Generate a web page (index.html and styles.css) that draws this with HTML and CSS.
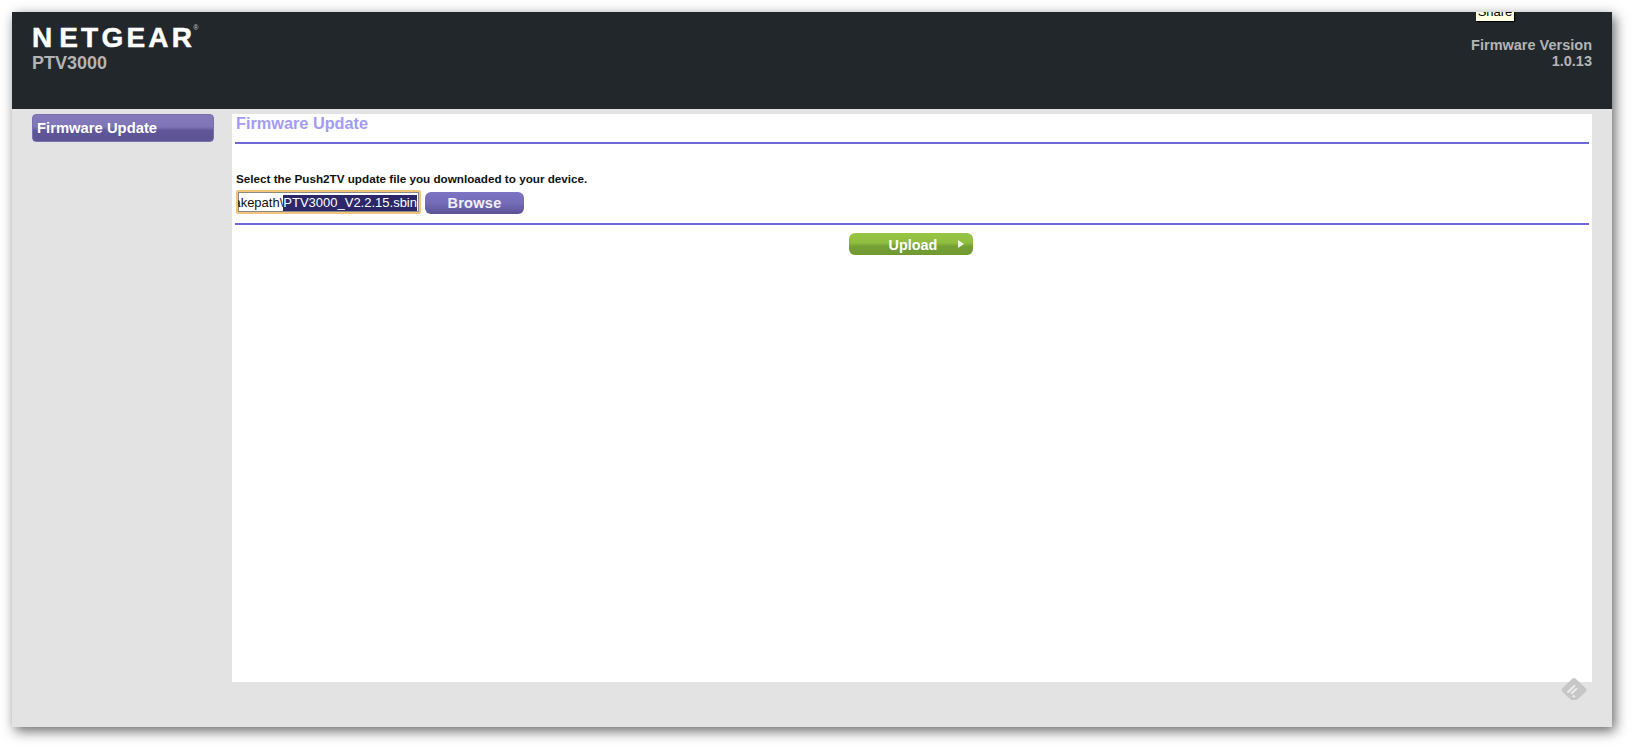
FILE: index.html
```html
<!DOCTYPE html>
<html lang="en">
<head>
<meta charset="utf-8">
<title>NETGEAR PTV3000 Firmware Update</title>
<link rel="stylesheet" href="styles.css">
</head>
<body>
<div class="window">
  <header class="masthead">
    <div class="brand">
      <div class="logo"><span class="logo-first">N</span>ETGEAR<sup class="reg">®</sup></div>
      <div class="model">PTV3000</div>
    </div>
    <div class="version">
      <div>Firmware Version</div>
      <div>1.0.13</div>
    </div>
    <div class="tooltip"><span>Share</span></div>
  </header>
  <div class="main">
    <nav class="sidebar">
      <div class="nav-item">Firmware Update</div>
    </nav>
    <section class="panel">
      <h1 class="panel-title">Firmware Update</h1>
      <div class="form-area">
        <p class="prompt">Select the Push2TV update file you downloaded to your device.</p>
        <div class="file-row">
          <div class="file-input"><span class="path">akepath\</span><span class="selected">PTV3000_V2.2.15.sbin</span></div>
          <div class="browse">Browse</div>
        </div>
      </div>
      <div class="actions">
        <div class="upload"><span>Upload</span><i class="arrow"></i></div>
      </div>
    </section>
  </div>
  <svg class="feedly" width="26" height="24" viewBox="0 0 26 24" aria-hidden="true">
    <path d="M10.800 1.300a3 3 0 0 1 4.400 0l9.500 9a2.400 2.400 0 0 1 0 3.400l-8 7.500a3 3 0 0 1-2 .8h-3.400a3 3 0 0 1-2-.8l-8-7.500a2.400 2.400 0 0 1 0-3.400z" fill="#c6c6c6"/>
    <path d="M7 14 13.500 7.800M10.800 15 15.500 10.800" fill="none" stroke="#ececec" stroke-width="2" stroke-linecap="round"/>
    <circle cx="12.800" cy="18.200" r="1.300" fill="#ececec"/>
  </svg>
</div>
</body>
</html>
```

FILE: styles.css
```css
* { box-sizing: border-box; }

html, body {
  margin: 0;
  padding: 0;
  height: 100%;
  background: #ffffff;
  overflow: hidden;
}

body {
  padding: 12px 20px 20px 12px;
  font-family: "Liberation Sans", Arial, sans-serif;
}

.window {
  position: relative;
  width: 1600px;
  height: 715px;
  background: #e3e3e3;
  box-shadow: 3px 4px 12px rgba(0, 0, 0, 0.6);
  display: flex;
  flex-direction: column;
}

.masthead {
  position: relative;
  height: 97px;
  flex: none;
  background: #22272b;
  display: flex;
  justify-content: space-between;
  padding: 0 20px 0 20px;
}

.logo {
  margin-top: 10px;
  height: 32px;
  font-size: 28px;
  line-height: 32px;
  font-weight: 700;
  letter-spacing: 3.2px;
  color: #ffffff;
  -webkit-text-stroke: 0.5px #ffffff;
}

.logo-first {
  letter-spacing: 7px;
}

.reg {
  font-size: 7px;
  font-weight: 400;
  letter-spacing: 0;
  color: #cfcfcf;
  vertical-align: 17px;
  line-height: 0;
  margin-left: -2px;
  -webkit-text-stroke: 0;
}

.model {
  margin-top: -1px;
  font-size: 18px;
  line-height: 20px;
  font-weight: 700;
  color: #b4b4b4;
}

.version {
  margin-top: 25px;
  text-align: right;
  font-size: 14.5px;
  line-height: 16px;
  font-weight: 700;
  color: #b4b4b4;
}

.tooltip {
  position: absolute;
  top: 0;
  left: 1464px;
  width: 38px;
  height: 9px;
  background: #ffffe1;
  box-shadow: 1px 1px 1px #000000;
  overflow: hidden;
  text-align: center;
  font-size: 13px;
  line-height: 14px;
  color: #000000;
}

.tooltip span {
  display: block;
  margin-top: -7px;
}

.main {
  flex: 1;
  display: flex;
  padding: 5px 20px 45px 20px;
}

.sidebar {
  width: 182px;
  flex: none;
  margin-right: 18px;
}

.nav-item {
  height: 28px;
  padding-left: 4px;
  border-radius: 4px;
  border: 1px solid #7a70b0;
  background: linear-gradient(#8479bb 0%, #8075b6 45%, #5f5598 60%, #5d5494 100%);
  color: #ffffff;
  font-size: 14.8px;
  line-height: 26px;
  font-weight: 700;
}

.panel {
  flex: 1;
  background: #ffffff;
  padding: 0 3px;
  display: flex;
  flex-direction: column;
}

.panel-title {
  margin: 0;
  height: 30px;
  padding: 0 0 0 1px;
  border-bottom: 2px solid #6f68d8;
  font-size: 16.3px;
  line-height: 18px;
  font-weight: 700;
  color: #a29cf5;
}

.form-area {
  height: 81px;
  border-bottom: 2px solid #6f68d8;
  padding: 28px 0 0 1px;
}

.prompt {
  margin: 0;
  font-size: 11.7px;
  line-height: 14px;
  font-weight: 700;
  color: #111111;
}

.file-row {
  display: flex;
  align-items: flex-start;
  margin-top: 4px;
}

.file-input {
  width: 185px;
  height: 24px;
  border: 2px solid #f3c57b;
  border-radius: 2px;
  box-shadow: inset 0 0 0 1px #8a8a8a;
  padding: 3px 2px 1px 0;
  display: flex;
  justify-content: flex-end;
  overflow: hidden;
  white-space: nowrap;
  font-size: 13px;
  line-height: 16px;
  color: #111111;
}

.selected {
  background: #2b2769;
  color: #ffffff;
}

.browse {
  width: 99px;
  height: 22px;
  margin: 2px 0 0 4px;
  border-radius: 6px;
  background: linear-gradient(#7c74c4 0%, #756cb8 50%, #5a5296 100%);
  color: #f0f0f8;
  text-align: center;
  font-size: 14.5px;
  line-height: 22px;
  font-weight: 700;
  letter-spacing: 0.3px;
}

.actions {
  display: flex;
  justify-content: center;
  padding-top: 8px;
}

.upload {
  position: relative;
  width: 124px;
  height: 22px;
  margin-right: 2px;
  padding-left: 4px;
  border-radius: 6px;
  background: linear-gradient(#97c644 0%, #8fbd40 45%, #76a034 60%, #709933 100%);
  color: #ffffff;
  text-align: center;
  font-size: 14.4px;
  line-height: 24px;
  font-weight: 700;
}

.arrow {
  position: absolute;
  right: 9px;
  top: 7px;
  width: 0;
  height: 0;
  border-left: 6px solid #eef5dc;
  border-top: 4px solid transparent;
  border-bottom: 4px solid transparent;
}

.feedly {
  position: absolute;
  left: 1549px;
  top: 666px;
}
```
